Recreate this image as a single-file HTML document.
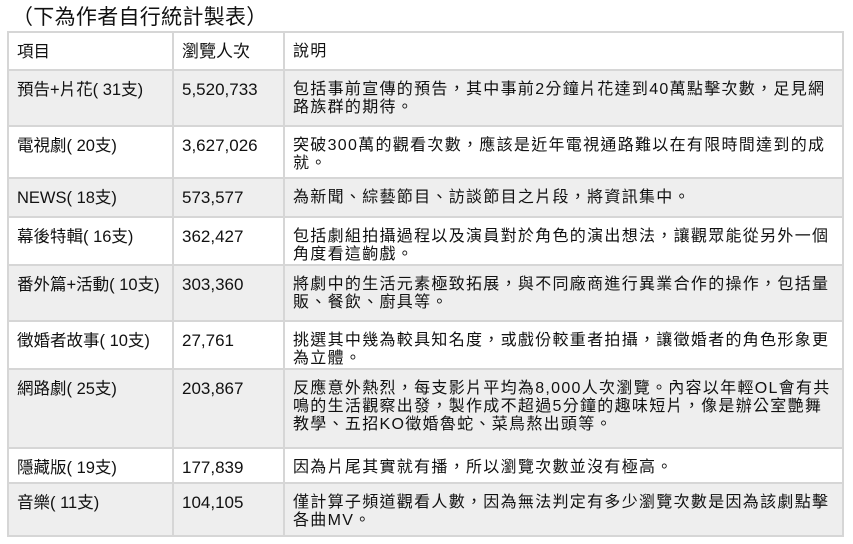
<!DOCTYPE html>
<html><head><meta charset="utf-8"><style>
body{margin:0;width:853px;height:544px;background:#fff;overflow:hidden;font-family:"Liberation Sans","Noto Sans CJK TC",sans-serif;color:#111;}
.t{position:absolute;left:12px;top:5px;font-size:21px;line-height:26px;letter-spacing:0.3px;}
.r{position:absolute;left:7px;width:837px;border-top:2px solid #d6d6d6;box-sizing:border-box;}
.g{background:#eeeeee;}
.c{position:absolute;top:0;bottom:0;font-size:16px;line-height:18px;padding-top:10px;padding-left:8px;box-sizing:border-box;}
.c1{left:0;width:165px;border-left:2px solid #d6d6d6;font-size:16.5px;}
.c2{left:165px;width:111px;border-left:2px solid #d6d6d6;font-size:17px;}
.c3{left:276px;right:0;border-left:2px solid #d6d6d6;border-right:2px solid #d6d6d6;letter-spacing:1.3px;}
.bot{position:absolute;left:7px;width:837px;top:535px;border-top:2px solid #d6d6d6;}
</style></head><body>
<div class="t">（下為作者自行統計製表）</div>

<div class="r" style="top:31px;height:38px"><div class="c c1">項目</div><div class="c c2">瀏覽人次</div><div class="c c3">說明</div></div>
<div class="r g" style="top:69px;height:56px"><div class="c c1">預告+片花( 31支)</div><div class="c c2">5,520,733</div><div class="c c3">包括事前宣傳的預告，其中事前2分鐘片花達到40萬點擊次數，足見網<br>路族群的期待。</div></div>
<div class="r" style="top:125px;height:52px"><div class="c c1">電視劇( 20支)</div><div class="c c2">3,627,026</div><div class="c c3">突破300萬的觀看次數，應該是近年電視通路難以在有限時間達到的成<br>就。</div></div>
<div class="r g" style="top:177px;height:39px"><div class="c c1">NEWS( 18支)</div><div class="c c2">573,577</div><div class="c c3">為新聞、綜藝節目、訪談節目之片段，將資訊集中。</div></div>
<div class="r" style="top:216px;height:48px"><div class="c c1">幕後特輯( 16支)</div><div class="c c2">362,427</div><div class="c c3">包括劇組拍攝過程以及演員對於角色的演出想法，讓觀眾能從另外一個<br>角度看這齣戲。</div></div>
<div class="r g" style="top:264px;height:56px"><div class="c c1">番外篇+活動( 10支)</div><div class="c c2">303,360</div><div class="c c3">將劇中的生活元素極致拓展，與不同廠商進行異業合作的操作，包括量<br>販、餐飲、廚具等。</div></div>
<div class="r" style="top:320px;height:48px"><div class="c c1">徵婚者故事( 10支)</div><div class="c c2">27,761</div><div class="c c3">挑選其中幾為較具知名度，或戲份較重者拍攝，讓徵婚者的角色形象更<br>為立體。</div></div>
<div class="r g" style="top:368px;height:79px"><div class="c c1">網路劇( 25支)</div><div class="c c2">203,867</div><div class="c c3">反應意外熱烈，每支影片平均為8,000人次瀏覽。內容以年輕OL會有共<br>鳴的生活觀察出發，製作成不超過5分鐘的趣味短片，像是辦公室艷舞<br>教學、五招KO徵婚魯蛇、菜鳥熬出頭等。</div></div>
<div class="r" style="top:447px;height:35px"><div class="c c1">隱藏版( 19支)</div><div class="c c2">177,839</div><div class="c c3">因為片尾其實就有播，所以瀏覽次數並沒有極高。</div></div>
<div class="r g" style="top:482px;height:53px"><div class="c c1">音樂( 11支)</div><div class="c c2">104,105</div><div class="c c3">僅計算子頻道觀看人數，因為無法判定有多少瀏覽次數是因為該劇點擊<br>各曲MV。</div></div>
<div class="bot"></div>
</body></html>
